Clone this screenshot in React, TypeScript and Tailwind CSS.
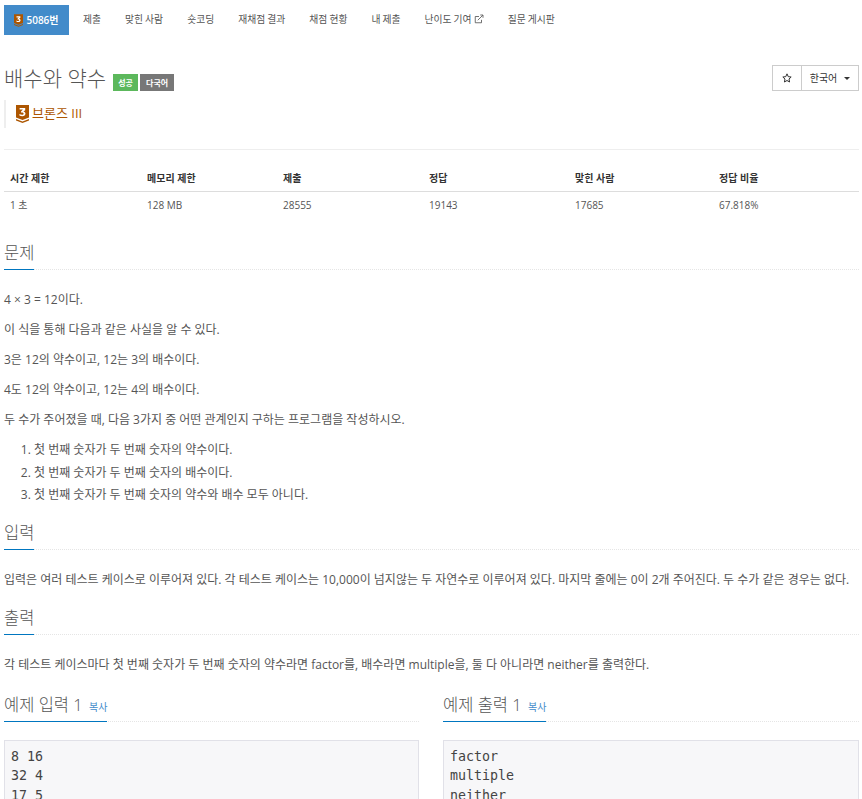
import React from "react";

const font = { sans: "font-['Open_Sans','Noto_Sans_CJK_KR',sans-serif]" };

const tabs = [
  { label: "제출" },
  { label: "맞힌 사람" },
  { label: "숏코딩" },
  { label: "재채점 결과" },
  { label: "채점 현황" },
  { label: "내 제출" },
  { label: "난이도 기여", ext: true },
  { label: "질문 게시판" },
];

const stats = [
  { head: "시간 제한", value: "1 초", w: "w-[137px]" },
  { head: "메모리 제한", value: "128 MB", w: "w-[136px]" },
  { head: "제출", value: "28555", w: "w-[146px]" },
  { head: "정답", value: "19143", w: "w-[146px]" },
  { head: "맞힌 사람", value: "17685", w: "w-[144px]" },
  { head: "정답 비율", value: "67.818%", w: "flex-1" },
];

function Medal({ size }: { size: "sm" | "lg" }) {
  const cls = size === "sm" ? "w-[9px] h-[13px]" : "w-[13px] h-[18px]";
  return (
    <svg viewBox="0 0 13 18" className={cls + " shrink-0"}>
      <path d="M0 0H13V12.5L6.5 15L0 12.5Z" fill="#ad5600" />
      <path d="M0 14L6.5 16.5L13 14V15.5L6.5 18L0 15.5Z" fill="#ad5600" />
      <path
        d="M3.6 3H9.2V5.2L7.4 6.4C8.6 6.6 9.5 7.4 9.5 8.6C9.5 10.2 8.2 11.2 6.4 11.2C5.2 11.2 4.2 10.9 3.4 10.4V8.9C4.2 9.4 5.2 9.7 6.1 9.7C7 9.7 7.6 9.3 7.6 8.7C7.6 8 6.9 7.6 5.6 7.6H5V6.4L6.9 4.6H3.6Z"
        fill="#fff"
      />
    </svg>
  );
}

function SectionTitle({ children }: { children: React.ReactNode }) {
  return (
    <div className="relative h-[32px] border-b border-dotted border-[#e5e5e5] text-[16.5px] font-light leading-[26px] text-[#555]">
      <span className="absolute bottom-[-1px] left-0 inline-block h-[32px] whitespace-nowrap border-b border-[#0076c0] pt-[2px]">
        {children}
      </span>
    </div>
  );
}

function SampleBox({ title, lines, className }: { title: string; lines: string[]; className: string }) {
  return (
    <div className={className}>
      <SectionTitle>
        {title} <span className="ml-[2px] text-[10px] font-normal text-[#428bca]">복사</span>
      </SectionTitle>
      <pre className="mt-[18px] h-[100px] border border-[#e1e1e8] bg-[#f7f7f9] px-[6px] pt-[6px] font-['DejaVu_Sans_Mono',monospace] text-[13.3px] leading-[19.5px] text-[#444]">
        {lines.join("\n")}
      </pre>
    </div>
  );
}

export default function App() {
  return (
    <div className={"h-[799px] w-[862px] overflow-hidden bg-white px-[4px] text-[12px] text-[#555] " + font.sans}>
      <div className="w-[855px]">
        <nav className="flex h-[35px] items-stretch pt-[5px] text-[9.8px] [word-spacing:-0.5px]">
          <div className="mr-[2px] flex h-[30px] w-[65px] items-center justify-center gap-[3px] bg-[#428bca] text-[10px] font-semibold text-white">
            <Medal size="sm" />
            5086번
          </div>
          {tabs.map((t) => (
            <div key={t.label} className="flex h-[30px] items-center whitespace-nowrap px-[12px] text-[#555]">
              {t.label}
              {t.ext && (
                <svg viewBox="0 0 12 12" className="mb-[2px] ml-[2px] h-[10px] w-[10px]" fill="none" stroke="#555" strokeWidth="1">
                  <path d="M9 7v3.5H1.5V3H6" />
                  <path d="M4.5 7.5L10.5 1.5M7.5 1.2h3.3v3.3" />
                </svg>
              )}
            </div>
          ))}
        </nav>

        <div className="mt-[25px] flex justify-between">
          <div className="flex items-end">
            <h1 className="text-[21px] font-light leading-[36px] text-[#555]">배수와 약수</h1>
            <span className="mb-[5px] ml-[7px] flex h-[17px] w-[25px] items-center justify-center bg-[#5cb85c] text-[8px] font-bold text-white">성공</span>
            <span className="mb-[5px] ml-[2px] flex h-[17px] w-[34px] items-center justify-center bg-[#777] text-[8px] font-bold text-white">다국어</span>
          </div>
          <div className="mt-[5px] flex h-[26px] border border-[#ccc] text-[10px] text-[#333]">
            <div className="flex w-[29px] items-center justify-center border-r border-[#ccc]">
              <svg viewBox="0 0 12 12" className="h-[10px] w-[10px]" fill="none" stroke="#333" strokeWidth="1.2">
                <path d="M6 1L7.5 4.4L11 4.8L8.4 7.2L9.1 10.8L6 9L2.9 10.8L3.6 7.2L1 4.8L4.5 4.4Z" />
              </svg>
            </div>
            <div className="flex w-[56px] items-center justify-center gap-[7px]">
              한국어
              <span className="h-0 w-0 border-x-[3px] border-t-[3px] border-x-transparent border-t-[#333]" />
            </div>
          </div>
        </div>

        <div className="mt-[4px] flex h-[28px] items-center gap-[3px] border-l-[2px] border-[#eee] pl-[10px] text-[13px] text-[#ad5600]">
          <Medal size="lg" />
          브론즈 III
        </div>

        <div className="mt-[21px] border-t border-[#eee]" />

        <div className="mt-[15px]">
          <div className="flex h-[27px] items-center border-b border-[#ddd] text-[10px] font-bold text-[#333]">
            {stats.map((s) => (
              <div key={s.head} className={s.w + " pl-[6px]"}>{s.head}</div>
            ))}
          </div>
          <div className="flex h-[27px] items-center text-[10px] text-[#555]">
            {stats.map((s) => (
              <div key={s.head} className={s.w + " pl-[6px]"}>{s.value}</div>
            ))}
          </div>
        </div>

        <div className="mt-[19px]">
          <SectionTitle>문제</SectionTitle>
        </div>
        <div className="mt-[20px] text-[12px] leading-[20px]">
          <p className="mb-[10px]">4 × 3 = 12이다.</p>
          <p className="mb-[10px]">이 식을 통해 다음과 같은 사실을 알 수 있다.</p>
          <p className="mb-[10px]">3은 12의 약수이고, 12는 3의 배수이다.</p>
          <p className="mb-[10px]">4도 12의 약수이고, 12는 4의 배수이다.</p>
          <p className="mb-[10px]">두 수가 주어졌을 때, 다음 3가지 중 어떤 관계인지 구하는 프로그램을 작성하시오.</p>
          <ol className="mt-[-1px] list-decimal pl-[30px] leading-[22.5px]">
            <li>첫 번째 숫자가 두 번째 숫자의 약수이다.</li>
            <li>첫 번째 숫자가 두 번째 숫자의 배수이다.</li>
            <li>첫 번째 숫자가 두 번째 숫자의 약수와 배수 모두 아니다.</li>
          </ol>
        </div>

        <div className="mt-[11px]">
          <SectionTitle>입력</SectionTitle>
        </div>
        <p className="mt-[20px] whitespace-nowrap text-[12px] leading-[20px]">
          입력은 여러 테스트 케이스로 이루어져 있다. 각 테스트 케이스는 10,000이 넘지않는 두 자연수로 이루어져 있다. 마지막 줄에는 0이 2개 주어진다. 두 수가 같은 경우는 없다.
        </p>

        <div className="mt-[13px]">
          <SectionTitle>출력</SectionTitle>
        </div>
        <p className="mt-[20px] whitespace-nowrap text-[12px] leading-[20px]">
          각 테스트 케이스마다 첫 번째 숫자가 두 번째 숫자의 약수라면 factor를, 배수라면 multiple을, 둘 다 아니라면 neither를 출력한다.
        </p>

        <div className="mt-[15px] flex gap-[24px]">
          <SampleBox className="w-[415px]" title="예제 입력 1" lines={["8 16", "32 4", "17 5"]} />
          <SampleBox className="w-[416px]" title="예제 출력 1" lines={["factor", "multiple", "neither"]} />
        </div>
      </div>
    </div>
  );
}
